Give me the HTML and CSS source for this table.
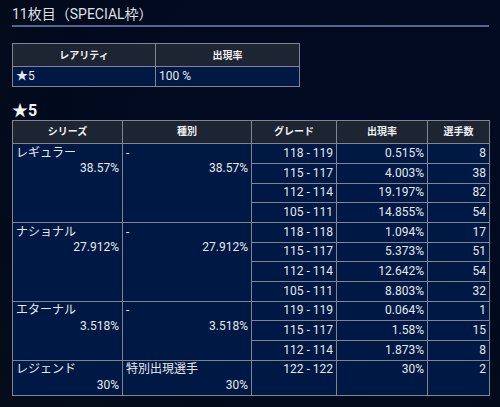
FILE: index.html
```html
<!DOCTYPE html>
<html lang="ja">
<head>
<meta charset="utf-8">
<link rel="stylesheet" href="styles.css">
</head>
<body>
<div class="page">
  <h1 class="title">11枚目（SPECIAL枠）</h1>

  <table class="tbl rarity">
    <colgroup><col class="c-r1"><col class="c-r2"></colgroup>
    <thead>
      <tr><th>レアリティ</th><th>出現率</th></tr>
    </thead>
    <tbody>
      <tr><td>★5</td><td>100 %</td></tr>
    </tbody>
  </table>

  <h2 class="rank">★5</h2>

  <table class="tbl detail">
    <colgroup>
      <col class="c-s"><col class="c-t"><col class="c-g"><col class="c-p"><col class="c-n">
    </colgroup>
    <thead>
      <tr><th>シリーズ</th><th>種別</th><th>グレード</th><th>出現率</th><th>選手数</th></tr>
    </thead>
    <tbody>
      <tr>
        <td rowspan="4" class="grp"><div>レギュラー</div><div class="r">38.57%</div></td>
        <td rowspan="4" class="grp"><div>-</div><div class="r">38.57%</div></td>
        <td class="r">118 - 119</td><td class="r">0.515%</td><td class="r">8</td>
      </tr>
      <tr><td class="r">115 - 117</td><td class="r">4.003%</td><td class="r">38</td></tr>
      <tr><td class="r">112 - 114</td><td class="r">19.197%</td><td class="r">82</td></tr>
      <tr><td class="r">105 - 111</td><td class="r">14.855%</td><td class="r">54</td></tr>
      <tr>
        <td rowspan="4" class="grp"><div>ナショナル</div><div class="r">27.912%</div></td>
        <td rowspan="4" class="grp"><div>-</div><div class="r">27.912%</div></td>
        <td class="r">118 - 118</td><td class="r">1.094%</td><td class="r">17</td>
      </tr>
      <tr><td class="r">115 - 117</td><td class="r">5.373%</td><td class="r">51</td></tr>
      <tr><td class="r">112 - 114</td><td class="r">12.642%</td><td class="r">54</td></tr>
      <tr><td class="r">105 - 111</td><td class="r">8.803%</td><td class="r">32</td></tr>
      <tr>
        <td rowspan="3" class="grp"><div>エターナル</div><div class="r">3.518%</div></td>
        <td rowspan="3" class="grp"><div>-</div><div class="r">3.518%</div></td>
        <td class="r">119 - 119</td><td class="r">0.064%</td><td class="r">1</td>
      </tr>
      <tr><td class="r">115 - 117</td><td class="r">1.58%</td><td class="r">15</td></tr>
      <tr><td class="r">112 - 114</td><td class="r">1.873%</td><td class="r">8</td></tr>
      <tr class="top">
        <td class="grp"><div>レジェンド</div><div class="r">30%</div></td>
        <td class="grp"><div>特別出現選手</div><div class="r">30%</div></td>
        <td class="r">122 - 122</td><td class="r">30%</td><td class="r">2</td>
      </tr>
    </tbody>
  </table>
</div>
</body>
</html>
```

FILE: styles.css
```css
html, body {
  margin: 0;
  padding: 0;
}
body {
  background: radial-gradient(ellipse at 70% 30%, #020b22 0%, #010a1d 60%, #060c18 100%);
  color: #e6e8ec;
  font-family: Roboto, "Noto Sans CJK JP", sans-serif;
  width: 500px;
  height: 407px;
  overflow: hidden;
}
.page {
  padding: 4px 11px 0 12px;
}
.title {
  margin: 0;
  font-size: 14px;
  font-weight: normal;
  line-height: 20px;
  padding-bottom: 1px;
  border-bottom: 2px solid #56648f;
  color: #dfe1e6;
}
.tbl {
  border-collapse: collapse;
  table-layout: fixed;
  font-size: 12px;
  line-height: 15.3px;
}
.tbl th, .tbl td {
  border: 1px solid #7f8490;
  padding: 1.7px 3px;
  text-align: left;
  vertical-align: top;
}
.tbl th {
  background: #1d2432;
  font-size: 10px;
  font-weight: bold;
  text-align: center;
  padding: 3.5px 3px;
  color: #eef0f4;
}
.tbl td {
  background: #001944;
}
.rarity {
  margin-top: 16px;
  width: 287px;
}
.c-r1 { width: 143px; }
.c-r2 { width: 144px; }
.rank {
  margin: 15px 0 0;
  font-size: 16px;
  line-height: 18px;
  font-weight: bold;
  color: #f2f3f6;
}
.detail {
  width: 477px;
}
.c-s { width: 110px; }
.c-t { width: 129px; }
.c-g { width: 85px; }
.c-p { width: 91px; }
.c-n { width: 62px; }
.tbl .r {
  text-align: right;
}
```
